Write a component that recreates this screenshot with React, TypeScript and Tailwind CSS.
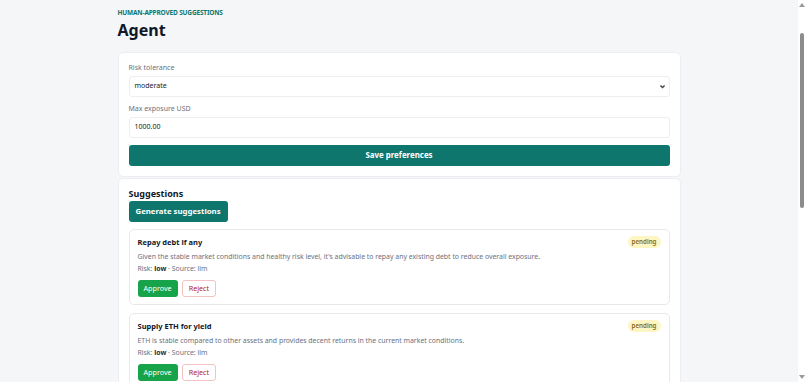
import React from 'react';

const suggestions = [
  {
    title: 'Repay debt if any',
    body: "Given the stable market conditions and healthy risk level, it's advisable to repay any existing debt to reduce overall exposure.",
    risk: 'low',
    source: 'llm',
  },
  {
    title: 'Supply ETH for yield',
    body: 'ETH is stable compared to other assets and provides decent returns in the current market conditions.',
    risk: 'low',
    source: 'llm',
  },
  {
    title: 'Keep a stablecoin buffer',
    body: 'Holding part of the portfolio in stablecoins limits downside while volatility stays low.',
    risk: 'low',
    source: 'llm',
  },
  {
    title: 'Review collateral ratio',
    body: 'Check the collateral ratio weekly so positions stay well above the liquidation threshold.',
    risk: 'low',
    source: 'llm',
  },
];

function SuggestionCard({ s }: { s: (typeof suggestions)[number] }) {
  return (
    <div className="rounded-[5px] border border-[#e6e8eb] bg-white pl-[8px] pr-[8px] pt-[6px] pb-[7px]">
      <div className="flex items-start justify-between">
        <div className="mt-[1px] text-[7.5px] leading-[10px] font-bold text-gray-900">{s.title}</div>
        <span className="h-[12px] rounded-full bg-[#fdf6c3] px-[4px] text-[6.2px] leading-[12px] font-semibold text-[#8a6a10]">pending</span>
      </div>
      <p className="mt-[4px] text-[6.9px] leading-[10px] text-gray-500">{s.body}</p>
      <div className="mt-[2px] text-[6.9px] leading-[10px] text-gray-500">
        Risk: <b className="font-bold text-gray-800">{s.risk}</b> · Source: {s.source}
      </div>
      <div className="mt-[6px] flex gap-[4px]">
        <button className="h-[17px] rounded-[3px] bg-[#16a34a] px-[6px] text-[7.2px] text-white">Approve</button>
        <button className="h-[17px] rounded-[3px] border border-[#f5c2c2] bg-white px-[6px] text-[7.2px] text-[#b42318]">Reject</button>
      </div>
    </div>
  );
}

function FakeScrollbar() {
  return (
    <div className="fixed top-0 right-0 flex h-screen w-[8px] flex-col items-center bg-white">
      <div className="mt-[3px] h-0 w-0 border-x-[3px] border-b-[4px] border-x-transparent border-b-[#9a9a9a]" />
      <div className="mt-[26px] h-[175px] w-[4px] rounded-full bg-[#8c8c8c]" />
      <div className="mt-auto mb-[3px] h-0 w-0 border-x-[3px] border-t-[4px] border-x-transparent border-t-[#9a9a9a]" />
    </div>
  );
}

export default function App() {
  return (
    <div className="min-h-screen bg-[#f4f6f8] pr-[8px]" style={{ fontFamily: '"Noto Sans", "Open Sans", sans-serif' }}>
      <div className="mx-auto w-[563px] pt-[8px] pb-[40px]">
        <div className="text-[6.5px] leading-[10px] font-bold uppercase tracking-tight text-[#0f766e]">Human-approved suggestions</div>
        <h1 className="mt-[2px] text-[16px] leading-[20px] font-bold text-gray-900">Agent</h1>

        <div className="mt-[12px] rounded-[5px] border border-[#eceef1] bg-white px-[10px] pt-[10px] pb-[10px]">
          <label className="block text-[7px] leading-[10px] text-gray-500">Risk tolerance</label>
          <div className="mt-[3px] flex h-[21px] items-center justify-between rounded-[3px] border border-[#eceef1] bg-white pl-[5px] pr-[3px]">
            <span className="text-[7px] text-gray-900">moderate</span>
            <svg width="7" height="7" viewBox="0 0 10 10">
              <path d="M2 3.5 L5 6.5 L8 3.5" fill="none" stroke="#444" strokeWidth="2" />
            </svg>
          </div>
          <label className="mt-[7px] block text-[7px] leading-[10px] text-gray-500">Max exposure USD</label>
          <div className="mt-[3px] flex h-[21px] items-center rounded-[3px] border border-[#eceef1] bg-white px-[5px]">
            <span className="text-[7px] text-gray-900">1000.00</span>
          </div>
          <button className="mt-[7px] block h-[21px] w-full rounded-[3px] bg-[#0f766e] text-[7.9px] font-bold text-white">Save preferences</button>
        </div>

        <div className="mt-[1px] rounded-[5px] border border-[#eceef1] bg-white px-[10px] pt-[9px] pb-[10px]">
          <h2 className="text-[9px] leading-[12px] font-bold text-gray-900">Suggestions</h2>
          <button className="mt-[1px] block h-[21px] rounded-[3px] bg-[#0f766e] px-[7px] text-[7.8px] font-bold text-white">Generate suggestions</button>
          <div className="mt-[7px] flex flex-col gap-[8px]">
            {suggestions.map((s) => (
              <SuggestionCard key={s.title} s={s} />
            ))}
          </div>
        </div>
      </div>
      <FakeScrollbar />
    </div>
  );
}
